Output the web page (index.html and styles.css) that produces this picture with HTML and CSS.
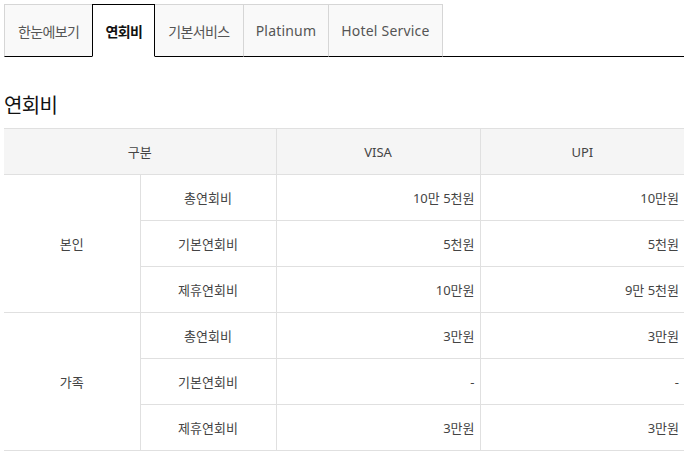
FILE: index.html
```html
<!DOCTYPE html>
<html lang="ko">
<head>
<meta charset="utf-8">
<link rel="stylesheet" href="styles.css">
</head>
<body>
<ul class="tabs">
  <li class="tab">한눈에보기</li>
  <li class="tab active">연회비</li>
  <li class="tab">기본서비스</li>
  <li class="tab latin">Platinum</li>
  <li class="tab latin">Hotel Service</li>
</ul>
<h2 class="title">연회비</h2>
<table class="fee">
  <colgroup>
    <col class="c1"><col class="c2"><col class="c3"><col class="c4">
  </colgroup>
  <thead>
    <tr><th colspan="2">구분</th><th>VISA</th><th>UPI</th></tr>
  </thead>
  <tbody>
    <tr><td rowspan="3" class="group">본인</td><td class="label">총연회비</td><td class="num">10만 5천원</td><td class="num">10만원</td></tr>
    <tr><td class="label">기본연회비</td><td class="num">5천원</td><td class="num">5천원</td></tr>
    <tr><td class="label">제휴연회비</td><td class="num">10만원</td><td class="num">9만 5천원</td></tr>
    <tr><td rowspan="3" class="group">가족</td><td class="label">총연회비</td><td class="num">3만원</td><td class="num">3만원</td></tr>
    <tr><td class="label">기본연회비</td><td class="num">-</td><td class="num">-</td></tr>
    <tr><td class="label">제휴연회비</td><td class="num">3만원</td><td class="num">3만원</td></tr>
  </tbody>
</table>
</body>
</html>
```
FILE: styles.css
```css
html, body {
  background: #fff;
}
body {
  margin: 4px 6px 0 4px;
  font-family: "Noto Sans", "Noto Sans CJK KR", sans-serif;
  color: #444;
}
.tabs {
  list-style: none;
  margin: 0;
  padding: 0;
  display: flex;
  border-bottom: 1px solid #000;
  height: 52px;
}
.tab {
  box-sizing: border-box;
  height: 53px;
  padding: 0 13px;
  display: flex;
  align-items: center;
  font-size: 14px;
  letter-spacing: -0.6px;
  color: #555;
  background: #f9f9f9;
  border: 1px solid #d6d6d6;
  border-left: none;
  border-bottom: 1px solid #000;
}
.tab.latin {
  letter-spacing: 0.2px;
  padding: 0 12px;
}
.tab:first-child {
  border-left: 1px solid #d6d6d6;
}
.tab.active {
  background: #fff;
  color: #111;
  font-weight: 700;
  border: 1px solid #000;
  border-bottom-color: #fff;
  margin-left: -1px;
  padding: 0 12px;
}
.title {
  margin: 34px 0 7px;
  font-size: 20px;
  line-height: 30px;
  font-weight: 400;
  color: #111;
  letter-spacing: -0.6px;
}
.fee {
  width: 680px;
  border-collapse: collapse;
  table-layout: fixed;
  font-size: 13px;
  letter-spacing: 0;
  color: #444;
}
.c1, .c2 { width: 136px; }
.c3, .c4 { width: 204px; }
.fee th, .fee td {
  height: 45px;
  padding: 0 5px;
  border: 1px solid #e0e0e0;
  font-weight: 400;
  text-align: center;
}
.fee th {
  background: #f5f5f5;
}
.fee tr > :first-child { border-left: none; }
.fee tr > :last-child { border-right: none; }
.fee td.group { border-left: none; }
.fee td.num { text-align: right; }
.fee tbody tr > td.num:last-child { border-right: none; }
```
